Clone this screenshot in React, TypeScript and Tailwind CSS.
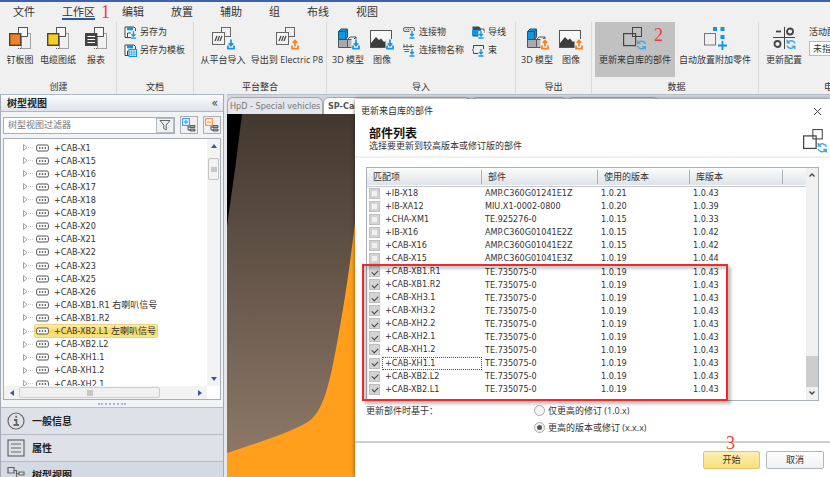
import React from "react";

const uiFont =
  "font-['DejaVu_Sans_Condensed','DejaVu_Sans','Noto_Sans_CJK_SC',sans-serif]";
const cjkFont = "font-['Open_Sans','Noto_Sans_CJK_SC',sans-serif]";

type Direction = "in" | "out";

function Transfer({ dir, x, y }: { dir: Direction; x: number; y: number }) {
  const color = dir === "in" ? "#1296e0" : "#f5821f";
  return (
    <g transform={`translate(${x} ${y})`} fill="none" stroke={color} strokeWidth="1.7">
      <rect x="-0.5" y="-0.5" width="9" height="11" fill="#f0f0f0" stroke="none" />
      <path d="M1 6V9.2H7V6" />
      {dir === "in" ? (
        <path d="M4 0V6M1.8 3.8L4 6.2L6.2 3.8" />
      ) : (
        <path d="M4 7V1.5M1.8 3.4L4 1L6.2 3.4" />
      )}
    </g>
  );
}

function Refresh({ x, y }: { x: number; y: number }) {
  return (
    <g transform={`translate(${x} ${y})`} fill="none" stroke="#3fa9e6" strokeWidth="1.4">
      <path d="M9 4A4 3.6 0 0 0 1.8 2.8M1.2 0.5V3.4H4.2" />
      <path d="M1 6A4 3.6 0 0 0 8.2 7.2M8.8 9.5V6.6H5.8" />
    </g>
  );
}

function SheetIcon({ fill, lines }: { fill: string; lines?: boolean }) {
  return (
    <svg width="24" height="24" viewBox="0 0 24 24" fill="none">
      <rect x="13.5" y="7.5" width="9" height="15" stroke="#555" strokeDasharray="1 1" />
      <path d="M10 22.5H13" stroke="#555" strokeDasharray="1 1" />
      <rect x="10.5" y="1.5" width="9" height="9" fill="#f7f7f7" stroke="#555" />
      <rect x="1.7" y="7.7" width="11" height="11.6" fill={fill} stroke="#444" strokeWidth="1.4" />
      {lines && <path d="M3.5 10.5H11M3.5 13.5H11M3.5 16.5H11" stroke="#fff" strokeWidth="1.2" />}
    </svg>
  );
}

function PlatformIcon({ dir }: { dir: Direction }) {
  return (
    <svg width="24" height="24" viewBox="0 0 24 24" fill="none">
      <rect x="10.5" y="1.5" width="9" height="9" stroke="#666" />
      <rect x="1.5" y="6.5" width="12" height="12" fill="#f4f4f4" stroke="#666" />
      <path d="M4 15L6 10M6.5 15L8.5 10M9 15L11 10" stroke="#444" strokeWidth="1.2" />
      <Transfer dir={dir} x={16} y={13.5} />
    </svg>
  );
}

function CubesIcon({ dir }: { dir: Direction }) {
  return (
    <svg width="24" height="24" viewBox="0 0 24 24" fill="none" strokeLinejoin="round">
      <path d="M2.5 13.5H11.5V21.5H2.5Z" fill="#a9a9a9" stroke="#555" />
      <path d="M11.5 13.5H17.5L20 11V19L17.5 21.5H11.5Z" fill="#b9b9b9" stroke="#555" />
      <path d="M11.5 13.5L14 11H20" stroke="#555" />
      <path d="M2.5 5.5L5 3H11.5V11L9.5 13.5H2.5Z" fill="#1296e0" stroke="#235578" />
      <path d="M2.5 5.5H9.5V13.5M9.5 5.5L11.5 3" stroke="#235578" />
      <Transfer dir={dir} x={16} y={13.5} />
    </svg>
  );
}

function ImageIcon({ dir }: { dir: Direction }) {
  return (
    <svg width="24" height="24" viewBox="0 0 24 24" fill="none">
      <rect x="0.5" y="4.5" width="21" height="17" fill="#f7f7f7" stroke="#555" />
      <path d="M1 21V17L6 11L9 14L11 12.5L14 16L16.5 14.5L20 18V21Z" fill="#3c3c3c" />
      <Transfer dir={dir} x={16} y={13.5} />
    </svg>
  );
}

function UpdatePartsIcon({ size = 24 }: { size?: number }) {
  return (
    <svg width={size} height={size} viewBox="0 0 24 24" fill="none">
      <rect x="9.5" y="1.5" width="9" height="9" stroke="#444" />
      <rect
        x="0.6"
        y="7.6"
        width="12"
        height="12"
        className="fill-inherit"
        stroke="#444"
        strokeWidth="1.2"
      />
      <Refresh x={13.5} y={14} />
    </svg>
  );
}

function AutoPlaceIcon() {
  return (
    <svg width="24" height="24" viewBox="0 0 24 24" fill="none">
      <rect x="1.5" y="7.5" width="11" height="11.5" stroke="#777" />
      <path d="M10 1H14V5H10ZM17.5 1H21.5V5H17.5ZM17.5 9H21.5V13H17.5Z" fill="#1296e0" />
      <path d="M19.5 15V24M15 19.5H24" stroke="#1296e0" strokeWidth="1.8" />
    </svg>
  );
}

function ConfigIcon() {
  return (
    <svg width="24" height="24" viewBox="0 0 24 24" fill="none" stroke="#444">
      <path d="M12.5 1V23M1 11.5H23" />
      <path d="M4 5.5H9" strokeWidth="1.8" />
      <circle cx="18" cy="5.5" r="3" strokeWidth="1.8" />
      <circle cx="5.5" cy="18" r="3" strokeWidth="1.8" />
      <Refresh x={14} y={13.5} />
    </svg>
  );
}

function SaveIcon({ template }: { template?: boolean }) {
  return (
    <svg width="13" height="13" viewBox="0 0 13 13" fill="none">
      <path d="M1 1H10L11.5 2.5V11.5H1Z" fill="#fff" stroke="#444" />
      <rect x="3" y="1" width="6" height="3.4" fill="#1296e0" />
      <path d="M3.5 11V7H8" stroke="#444" />
      {template ? (
        <>
          <rect x="5" y="5.5" width="7.5" height="7" fill="#d9effb" stroke="#1296e0" />
          <path d="M5 8H12.5M7.5 5.5V12.5M10 5.5V12.5M5 10.2H12.5" stroke="#1296e0" strokeWidth="0.6" />
        </>
      ) : (
        <>
          <rect x="7" y="5" width="6" height="8" fill="#f0f0f0" />
          <path d="M9.5 5V10M7.5 8.2L9.5 10.4L11.5 8.2M7 12.2H12" stroke="#1296e0" strokeWidth="1.3" />
        </>
      )}
    </svg>
  );
}

function SmallIcon({ kind }: { kind: "connector" | "names" | "wire" | "bundle" }) {
  return (
    <svg width="13" height="13" viewBox="0 0 13 13" fill="none">
      {kind === "connector" && (
        <>
          <rect x="0.5" y="1.5" width="11" height="4" rx="1.5" fill="#ddd" stroke="#666" />
          <path d="M3 3.5H9" stroke="#666" strokeDasharray="1 1" />
        </>
      )}
      {kind === "names" && (
        <>
          <path d="M1 0V4M4 0V4M8 0V4" stroke="#666" />
          <path d="M0 2.5H11M0.5 5.5H7M1.5 7.5H6" stroke="#666" />
        </>
      )}
      {kind === "wire" && (
        <>
          <path d="M0.5 0.5H7L9 2.5V10.5H0.5Z" fill="#3c4b55" />
          <path d="M0 4H9V9.5H0Z" fill="#1296e0" />
          <path d="M9 3H12V7" stroke="#555" />
        </>
      )}
      {kind === "bundle" && (
        <path d="M6.5 9.5H1.5V7.5L0.5 6L1.5 4.5V1.5H11.5V6" stroke="#444" />
      )}
      <rect x="6.5" y="5" width="5.5" height="8" fill="#f0f0f0" />
      <path d="M9 5V9.5M7.2 8L9 10L10.8 8M6.5 12H11.5" stroke="#1296e0" strokeWidth="1.4" />
    </svg>
  );
}

function BigButton({
  icon,
  label,
  width,
  active,
  children,
}: {
  icon: React.ReactNode;
  label: string;
  width: string;
  active?: boolean;
  children?: React.ReactNode;
}) {
  return (
    <button
      className={`relative flex h-[55px] shrink-0 flex-col items-center gap-1 whitespace-nowrap pt-1 ${width} ${
        active ? "bg-[#c1c1c1] fill-[#c1c1c1]" : ""
      }`}
    >
      {icon}
      <span className="leading-3">{label}</span>
      {children}
    </button>
  );
}

function SmallButton({ icon, label }: { icon: React.ReactNode; label: string }) {
  return (
    <button className="flex h-[18px] items-center gap-[3px] whitespace-nowrap leading-3">
      {icon}
      {label}
    </button>
  );
}

function Group({
  label,
  width,
  children,
}: {
  label: string;
  width: string;
  children: React.ReactNode;
}) {
  return (
    <section className={`flex shrink-0 flex-col border-r border-[#dadada] ${width}`}>
      <div className="flex h-[56px]">{children}</div>
      <h2 className="mt-[3px] text-center leading-3">{label}</h2>
    </section>
  );
}

function Ribbon() {
  return (
    <div className={`flex h-[73px] overflow-hidden pt-px text-[9px] text-[#333] ${cjkFont}`}>
      <Group label="创建" width="w-[117px] pl-px">
        <BigButton width="w-[38px]" icon={<SheetIcon fill="#f5821f" />} label="钉板图" />
        <BigButton width="w-[38px]" icon={<SheetIcon fill="#f9cf1d" />} label="电缆图纸" />
        <BigButton width="w-[38px]" icon={<SheetIcon fill="#444" lines />} label="报表" />
      </Group>
      <Group label="文档" width="w-[77px]">
        <div className="flex flex-col pl-[7px] pt-px">
          <SmallButton icon={<SaveIcon />} label="另存为" />
          <SmallButton icon={<SaveIcon template />} label="另存为模板" />
        </div>
      </Group>
      <Group label="平台整合" width="w-[133px]">
        <BigButton width="w-[58px]" icon={<PlatformIcon dir="in" />} label="从平台导入" />
        <BigButton width="w-[70px]" icon={<PlatformIcon dir="out" />} label="导出到 Electric P8" />
      </Group>
      <Group label="导入" width="w-[189px]">
        <BigButton width="w-[42px]" icon={<CubesIcon dir="in" />} label="3D 模型" />
        <BigButton width="w-[26px]" icon={<ImageIcon dir="in" />} label="图像" />
        <div className="flex flex-col pl-2 pt-px">
          <SmallButton icon={<SmallIcon kind="connector" />} label="连接物" />
          <SmallButton icon={<SmallIcon kind="names" />} label="连接物名称" />
        </div>
        <div className="flex flex-col pl-2 pt-px">
          <SmallButton icon={<SmallIcon kind="wire" />} label="导线" />
          <SmallButton icon={<SmallIcon kind="bundle" />} label="束" />
        </div>
      </Group>
      <Group label="导出" width="w-[76px]">
        <BigButton width="w-[42px]" icon={<CubesIcon dir="out" />} label="3D 模型" />
        <BigButton width="w-[26px]" icon={<ImageIcon dir="out" />} label="图像" />
      </Group>
      <Group label="数据" width="w-[167px] pl-[3px]">
        <BigButton width="w-[80px]" icon={<UpdatePartsIcon />} label="更新来自库的部件" active>
          <Mark className="left-[59px] top-[4px]">2</Mark>
        </BigButton>
        <BigButton width="w-[80px]" icon={<AutoPlaceIcon />} label="自动放置附加零件" />
      </Group>
      <Group label="电" width="w-[140px]">
        <BigButton width="w-[50px]" icon={<ConfigIcon />} label="更新配置" />
        <label className="flex flex-col gap-[3px] pt-1 leading-3">
          活动配置
          <select className="h-[15px] w-[80px] appearance-none border border-[#bbb] bg-white px-[3px] leading-3">
            <option>未指定</option>
          </select>
        </label>
      </Group>
    </div>
  );
}

function Mark({ className, children }: { className: string; children: React.ReactNode }) {
  return (
    <span
      className={`absolute font-['Liberation_Serif',serif] text-[18px] font-normal leading-[18px] text-[#f23b3b] ${className}`}
    >
      {children}
    </span>
  );
}

const menus = ["文件", "工作区", "编辑", "放置", "辅助", "组", "布线", "视图"];

function MenuBar() {
  return (
    <nav className={`flex h-[19px] gap-[27px] pl-[13px] text-[11px] text-[#333] ${cjkFont}`}>
      {menus.map((m) => (
        <button
          key={m}
          className={`relative h-[18px] border-b-2 pt-[2px] leading-4 ${
            m === "工作区" ? "border-[#2f56a3]" : "border-transparent"
          }`}
        >
          {m}
          {m === "工作区" && <Mark className="left-[39px] top-px">1</Mark>}
        </button>
      ))}
    </nav>
  );
}

const treeItems = [
  "+CAB-X1",
  "+CAB-X15",
  "+CAB-X16",
  "+CAB-X17",
  "+CAB-X18",
  "+CAB-X19",
  "+CAB-X20",
  "+CAB-X21",
  "+CAB-X22",
  "+CAB-X23",
  "+CAB-X25",
  "+CAB-X26",
  "+CAB-XB1.R1 右喇叭信号",
  "+CAB-XB1.R2",
  "+CAB-XB2.L1 左喇叭信号",
  "+CAB-XB2.L2",
  "+CAB-XH1.1",
  "+CAB-XH1.2",
  "+CAB-XH2.1",
];

function TreeRow({ label }: { label: string }) {
  const selected = label.includes("XB2.L1");
  return (
    <li className="flex min-h-0 flex-1 items-center pl-[18px]">
      <svg width="12" height="13" viewBox="0 0 12 13" fill="none" className="shrink-0">
        <path d="M1.5 3.5L5 6.5L1.5 9.5Z" fill="#fff" stroke="#999" strokeWidth="0.9" />
        <path d="M6 6.5H12" stroke="#ccc" strokeDasharray="1 1" />
      </svg>
      <span
        className={`flex items-center gap-[5px] whitespace-nowrap rounded-xs border px-px leading-3 ${
          selected
            ? "border-[#ecd27a] bg-linear-to-b from-[#fdeeb0] via-[#f9d653] to-[#fbe48c]"
            : "border-transparent"
        }`}
      >
        <svg width="13" height="8" viewBox="0 0 13 8" fill="none">
          <rect x="0.6" y="1" width="11.8" height="6" rx="1.5" fill="#fff" stroke="#555" />
          <path d="M3 4H4.4M5.8 4H7.2M8.6 4H10" stroke="#444" strokeWidth="1.4" />
        </svg>
        {label}
      </span>
    </li>
  );
}

function Triangle({ d }: { d: string }) {
  return (
    <svg width="8" height="8" viewBox="0 0 8 8">
      <path d={d} fill="#3d5590" />
    </svg>
  );
}

function SidePanel() {
  return (
    <aside className="flex w-[224px] shrink-0 flex-col border-x border-[#a4abb5] bg-[#f1f3f5]">
      <header className="flex h-[18px] shrink-0 items-center justify-between border-y border-[#b0b7c1] bg-linear-to-b from-[#fafbfc] to-[#dfe3e9] pl-[6px] pr-[5px]">
        <h2 className={`text-[10px] font-bold leading-4 text-[#222] ${cjkFont}`}>树型视图</h2>
        <button aria-label="折叠" className="text-[12px] leading-3 text-[#444]">
          «
        </button>
      </header>
      <div className="flex h-[26px] shrink-0 items-center gap-[5px] px-[2px]">
        <div className="flex h-[17px] min-w-0 flex-1 border border-[#a7aeb8] bg-white">
          <input
            aria-label="树型视图过滤器"
            placeholder="树型视图过滤器"
            className={`min-w-0 flex-1 px-1 text-[9px] outline-none placeholder:text-[#777] ${cjkFont}`}
          />
          <button
            aria-label="过滤"
            className="flex w-[18px] items-center justify-center border border-[#b6bcc4] bg-[#f0f1f3]"
          >
            <svg width="12" height="12" viewBox="0 0 12 12" fill="none">
              <path d="M1 1.5H11L7.2 6V11L4.8 9.5V6Z" stroke="#666" />
            </svg>
          </button>
        </div>
        {[
          { name: "全部展开", color: "#1296e0", d: "M2 4H6M4 2V6" },
          { name: "全部折叠", color: "#f5821f", d: "M2 4H6" },
        ].map((b) => (
          <button
            key={b.name}
            aria-label={b.name}
            className="flex size-[18px] items-center justify-center border border-[#a7aeb8] bg-[#f0f1f3]"
          >
            <svg width="14" height="14" viewBox="0 0 14 14" fill="none">
              <rect x="0.7" y="0.7" width="6.6" height="6.6" fill="#fff" stroke={b.color} />
              <path d={b.d} stroke={b.color} />
              <path d="M6 8V12H8M6 9H8" stroke="#555" />
              <path d="M8 7.5H13V9.5H8ZM8 11H13V13H8Z" fill="#aaa" stroke="#444" strokeWidth="0.8" />
            </svg>
          </button>
        ))}
      </div>
      <div className="mx-[2px] flex min-h-0 flex-1 flex-col border border-[#a7aeb8] bg-white">
        <div className="flex min-h-0 flex-1 overflow-hidden">
          <ul className="-mb-[4px] flex min-w-0 flex-1 flex-col pt-[2px] text-[9px] text-[#333]">
            {treeItems.map((t) => (
              <TreeRow key={t} label={t} />
            ))}
          </ul>
          <div className="flex w-[13px] flex-col items-center bg-[#f3f3f3] pb-[3px] pt-[3px]">
            <Triangle d="M1 6L4 2L7 6Z" />
            <div className="mt-2 flex h-[22px] w-[11px] flex-col items-center justify-center gap-px rounded-xs border border-[#c3c3c3] bg-[#f2f2f2]">
              <span className="h-[5px] w-[6px] bg-[#c6c6c6]" />
            </div>
            <div className="flex-1" />
            <Triangle d="M1 2L4 6L7 2Z" />
          </div>
        </div>
        <div className="flex h-[13px] shrink-0 items-center bg-[#f3f3f3] pl-1">
          <Triangle d="M6 1L2 4L6 7Z" />
          <div className="ml-[3px] flex h-[11px] w-[141px] items-center justify-center rounded-xs border border-[#cdcdcd] bg-[#f0f0f0]">
            <span className="size-[6px] bg-[#c6c6c6]" />
          </div>
          <div className="flex-1" />
          <Triangle d="M2 1L6 4L2 7Z" />
          <span className="ml-[3px] h-full w-[13px] bg-white" />
        </div>
      </div>
      <div className="flex h-[8px] shrink-0 items-center justify-center border-b border-[#b4bbc5]">
        <span className="w-[28px] border-t-2 border-dotted border-[#9db9d8]" />
      </div>
      <div className={`h-[69px] shrink-0 overflow-hidden text-[10px] font-bold text-[#222] ${cjkFont}`}>
        <SectionButton
          label="一般信息"
          icon={
            <>
              <circle cx="9" cy="9" r="8" />
              <path d="M7 8H9.5V13M6.5 13H12" strokeWidth="1.8" />
              <path d="M8.3 4.8H10" strokeWidth="2" />
            </>
          }
        />
        <SectionButton
          label="属性"
          icon={
            <>
              <rect x="1" y="1" width="16" height="16" />
              <path d="M4 5H14M4 9H14M4 13H14" />
            </>
          }
        />
        <SectionButton
          label="树型视图"
          icon={
            <>
              <path d="M1 1.5H7V7H1ZM12 6H17V9H12ZM12 13H17V16H12Z" />
              <path d="M7 4.5H9.5V14.5H12M9.5 7.5H12" />
            </>
          }
        />
      </div>
    </aside>
  );
}

function SectionButton({ label, icon }: { label: string; icon: React.ReactNode }) {
  return (
    <button className="flex h-[27px] w-full items-center gap-[7px] border-b border-[#b4bbc5] bg-[#dee2e8] pl-[6px] text-left last:bg-[#d3dae4]">
      <svg width="18" height="18" viewBox="0 0 18 18" fill="none" stroke="#666" strokeWidth="1.2">
        {icon}
      </svg>
      {label}
    </button>
  );
}

function Workspace() {
  return (
    <main className="ml-[3px] flex min-w-0 flex-1 flex-col">
      <div className="flex h-[20px] shrink-0 items-end border-t border-[#b9bfc7] bg-[#d3d7dc] text-[9px] text-[#777]">
        <button className="h-[17px] w-[96px] shrink-0 whitespace-nowrap rounded-t-md border border-b-0 border-[#a3a9b2] bg-[#e3e6ea] pl-[2px] text-left leading-3">
          HpD - Special vehicles
        </button>
        <button className="h-[17px] w-[148px] shrink-0 rounded-t-md border border-b-0 border-[#a3a9b2] bg-white pl-1 text-left font-bold leading-3 text-[#555]">
          SP-Cab
        </button>
        <span className="h-[17px] w-[96px] rounded-t-md border border-[#a3a9b2] bg-[#dfe2e6]" />
        <span className="h-[17px] w-[92px] rounded-t-md border border-[#a3a9b2] bg-[#dfe2e6]" />
      </div>
      <div className="min-h-0 flex-1 overflow-hidden bg-linear-to-b from-[#43382f] to-[#937d6c]">
        <svg width="128" height="363" viewBox="0 0 128 363">
          <path d="M0 0H15L9 48L0 112Z" fill="#000" />
          <path
            d="M128 108C122 160 115 205 106 250C101 274 95 298 82 307C70 316 30 329 0 339V363H128Z"
            fill="#ff9f1c"
          />
        </svg>
      </div>
    </main>
  );
}

const rows: [string, string, string, string, boolean][] = [
  ["+IB-X18", "AMP.C360G01241E1Z", "1.0.21", "1.0.43", false],
  ["+IB-XA12", "MIU.X1-0002-0800", "1.0.20", "1.0.39", false],
  ["+CHA-XM1", "TE.925276-0", "1.0.15", "1.0.33", false],
  ["+IB-X16", "AMP.C360G01041E2Z", "1.0.15", "1.0.42", false],
  ["+CAB-X16", "AMP.C360G01041E2Z", "1.0.15", "1.0.42", false],
  ["+CAB-X15", "AMP.C360G01041E3Z", "1.0.19", "1.0.44", false],
  ["+CAB-XB1.R1", "TE.735075-0", "1.0.19", "1.0.43", true],
  ["+CAB-XB1.R2", "TE.735075-0", "1.0.19", "1.0.43", true],
  ["+CAB-XH3.1", "TE.735075-0", "1.0.19", "1.0.43", true],
  ["+CAB-XH3.2", "TE.735075-0", "1.0.19", "1.0.43", true],
  ["+CAB-XH2.2", "TE.735075-0", "1.0.19", "1.0.43", true],
  ["+CAB-XH2.1", "TE.735075-0", "1.0.19", "1.0.43", true],
  ["+CAB-XH1.2", "TE.735075-0", "1.0.19", "1.0.43", true],
  ["+CAB-XH1.1", "TE.735075-0", "1.0.19", "1.0.43", true],
  ["+CAB-XB2.L2", "TE.735075-0", "1.0.19", "1.0.43", true],
  ["+CAB-XB2.L1", "TE.735075-0", "1.0.19", "1.0.43", true],
];

const columns = [
  { name: "匹配项", width: "w-[115px]" },
  { name: "部件", width: "w-[116px]" },
  { name: "使用的版本", width: "w-[92px]" },
  { name: "库版本", width: "w-[93px]" },
];

function PartsTable() {
  return (
    <div className="relative mx-[11px] mt-[9px] flex h-[234px] border border-[#a9b0ba]">
      <div className="min-w-0 flex-1">
        <table className="h-[228px] w-full table-fixed border-collapse text-left text-[9px] leading-3 text-[#333]">
          <thead className={cjkFont}>
            <tr className="h-[18px] border-b border-[#c5cad1] bg-linear-to-b from-[#fbfcfd] to-[#dfe3e8]">
              {columns.map((c) => (
                <th key={c.name} className={`p-0 font-normal ${c.width}`}>
                  <span className="block border-r border-[#a9b0ba] pl-[6px] leading-[14px]">{c.name}</span>
                </th>
              ))}
              <th className="p-0" aria-label="空" />
            </tr>
          </thead>
          <tbody>
            {rows.map(([name, part, used, lib, checked]) => (
              <tr key={name}>
                <td className="p-0">
                  <label className="flex items-center gap-[2px] pl-[2px]">
                    <input
                      type="checkbox"
                      defaultChecked={checked}
                      className="flex size-[11px] shrink-0 appearance-none items-center justify-center border border-[#bfbfbf] bg-[#d4d4d4] before:size-[5px] before:bg-[#f0f0f0] checked:before:h-[6px] checked:before:w-[4px] checked:before:rotate-45 checked:before:border-b checked:before:border-r checked:before:border-[#444] checked:before:bg-transparent"
                    />
                    <span
                      className={`flex-1 border border-dotted pl-[2px] leading-[11px] ${
                        name === "+CAB-XH1.1" ? "border-[#555]" : "border-transparent"
                      }`}
                    >
                      {name}
                    </span>
                  </label>
                </td>
                <td className="p-0 pl-[3px]">{part}</td>
                <td className="p-0 pl-[3px]">{used}</td>
                <td className="p-0 pl-[3px]">{lib}</td>
                <td className="p-0" />
              </tr>
            ))}
          </tbody>
        </table>
      </div>
      <div className="flex w-[12px] flex-col items-center bg-[#f0f0f0] py-1">
        <svg width="8" height="6" viewBox="0 0 8 6" fill="none" stroke="#444" strokeWidth="1.4">
          <path d="M1.5 4.5L4 2L6.5 4.5" />
        </svg>
        <div className="flex-1" />
        <div className="mb-[3px] h-[31px] w-full bg-[#cdcdcd]" />
        <svg width="8" height="6" viewBox="0 0 8 6" fill="none" stroke="#444" strokeWidth="1.4">
          <path d="M1.5 1.5L4 4L6.5 1.5" />
        </svg>
      </div>
      <div className="pointer-events-none absolute -bottom-px -left-[5px] h-[137px] w-[366px] border-2 border-[#f02a2a] shadow-[3px_3px_3px_rgba(0,0,0,0.25),inset_3px_3px_3px_rgba(0,0,0,0.2)]" />
    </div>
  );
}

function Radio({ label, checked }: { label: string; checked?: boolean }) {
  return (
    <label className="flex h-[17px] items-center gap-[3px]">
      <input
        type="radio"
        name="basis"
        defaultChecked={checked}
        className="flex size-[11px] appearance-none items-center justify-center rounded-full border border-[#aaa] bg-[#f4f4f4] before:size-[5px] before:rounded-full before:bg-transparent checked:before:bg-[#555]"
      />
      {label}
    </label>
  );
}

function Dialog() {
  return (
    <div
      role="dialog"
      aria-label="更新来自库的部件"
      className={`absolute bottom-0 left-[355px] right-0 top-[97px] flex flex-col bg-white text-[9px] text-[#333] shadow-[0_0_4px_rgba(0,0,0,0.5)] ${cjkFont}`}
    >
      <div className="flex h-[24px] shrink-0 items-center justify-between pl-[6px] pr-2">
        <span>更新来自库的部件</span>
        <button aria-label="关闭">
          <svg width="9" height="9" viewBox="0 0 9 9" fill="none" stroke="#444">
            <path d="M1 1L8 8M8 1L1 8" />
          </svg>
        </button>
      </div>
      <header className="flex h-[35px] shrink-0 items-start justify-between border-b-2 border-[#f0f0f0] pl-[14px] pr-[2px]">
        <div className="pt-1">
          <h1 className="text-[12px] font-bold leading-[13px] text-[#111]">部件列表</h1>
          <p className="leading-3">选择要更新到较高版本或修订版的部件</p>
        </div>
        <span className="fill-white pt-[5px]">
          <UpdatePartsIcon size={25} />
        </span>
      </header>
      <div className={uiFont}>
        <PartsTable />
      </div>
      <div
        role="radiogroup"
        aria-labelledby="basis-label"
        className="flex shrink-0 px-[11px] pt-px"
      >
        <span id="basis-label" className="w-[168px] leading-[17px]">
          更新部件时基于：
        </span>
        <div>
          <Radio label="仅更高的修订 (1.0.x)" />
          <Radio label="更高的版本或修订 (x.x.x)" checked />
        </div>
      </div>
      <footer className="relative mt-[5px] flex flex-1 items-start justify-end gap-[6px] border-t-2 border-[#cfcfcf] pr-[6px] pt-[8px]">
        <Mark className="right-[95px] -top-[9px]">3</Mark>
        <button className="h-[18px] w-[57px] rounded-xs border border-[#e3c46a] bg-linear-to-b from-[#fdeeb3] to-[#fbdf7c] leading-3">
          开始
        </button>
        <button className="h-[18px] w-[58px] rounded-xs border border-[#b2b7be] bg-linear-to-b from-white to-[#eff0f2] leading-3">
          取消
        </button>
      </footer>
    </div>
  );
}

export default function App() {
  return (
    <div
      className={`relative flex h-screen w-full flex-col overflow-hidden border-t-2 border-[#3b62ab] bg-[#f0f0f0] ${uiFont}`}
    >
      <MenuBar />
      <Ribbon />
      <div className="flex min-h-0 flex-1 bg-[#e4e7eb]">
        <SidePanel />
        <Workspace />
      </div>
      <Dialog />
    </div>
  );
}
